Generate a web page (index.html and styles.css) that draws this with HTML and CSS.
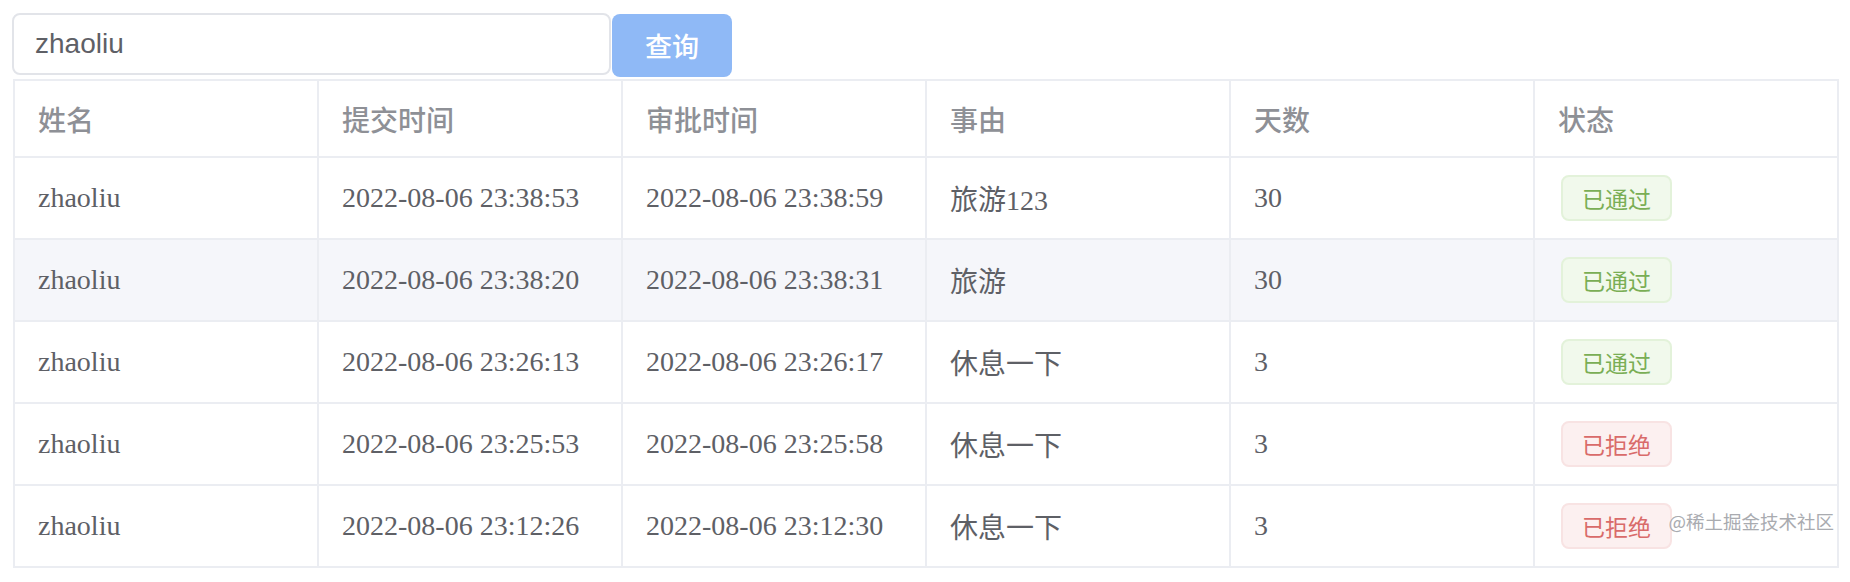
FILE: index.html
```html
<!DOCTYPE html>
<html lang="zh">
<head>
<meta charset="utf-8">
<title>审批记录</title>
<link rel="stylesheet" href="styles.css">
</head>
<body>
<div class="page">
  <div class="toolbar">
    <input class="search" type="text" value="zhaoliu">
    <button class="btn" type="button">查询</button>
  </div>
  <table class="grid">
    <colgroup>
      <col><col><col><col><col><col>
    </colgroup>
    <thead>
      <tr><th>姓名</th><th>提交时间</th><th>审批时间</th><th>事由</th><th>天数</th><th>状态</th></tr>
    </thead>
    <tbody>
      <tr><td>zhaoliu</td><td>2022-08-06 23:38:53</td><td>2022-08-06 23:38:59</td><td>旅游123</td><td>30</td><td><span class="tag ok">已通过</span></td></tr>
      <tr class="hover"><td>zhaoliu</td><td>2022-08-06 23:38:20</td><td>2022-08-06 23:38:31</td><td>旅游</td><td>30</td><td><span class="tag ok">已通过</span></td></tr>
      <tr><td>zhaoliu</td><td>2022-08-06 23:26:13</td><td>2022-08-06 23:26:17</td><td>休息一下</td><td>3</td><td><span class="tag ok">已通过</span></td></tr>
      <tr><td>zhaoliu</td><td>2022-08-06 23:25:53</td><td>2022-08-06 23:25:58</td><td>休息一下</td><td>3</td><td><span class="tag no">已拒绝</span></td></tr>
      <tr><td>zhaoliu</td><td>2022-08-06 23:12:26</td><td>2022-08-06 23:12:30</td><td>休息一下</td><td>3</td><td><span class="tag no">已拒绝</span></td></tr>
    </tbody>
  </table>
  <div class="watermark">@稀土掘金技术社区</div>
</div>
</body>
</html>
```

FILE: styles.css
```css
html, body {
  margin: 0;
  padding: 0;
  background: #ffffff;
}
.page {
  position: relative;
  width: 1850px;
  height: 582px;
  padding: 13px 0 0 12px;
  box-sizing: border-box;
}
.toolbar {
  display: flex;
  align-items: flex-start;
}
.search {
  box-sizing: border-box;
  width: 599px;
  height: 62px;
  margin: 0;
  padding: 0 0 0 21px;
  border: 2px solid #e2e4e9;
  border-radius: 8px;
  font-family: "Liberation Sans", "Noto Sans CJK SC", sans-serif;
  font-size: 28px;
  color: #5e6066;
  outline: none;
  background: #fff;
}
.btn {
  box-sizing: border-box;
  width: 120px;
  height: 63px;
  margin: 1px 0 0 1px;
  padding: 0;
  border: none;
  border-radius: 8px;
  background: #8fb9f6;
  color: #ffffff;
  font-family: "Noto Sans CJK SC", sans-serif;
  font-weight: 500;
  font-size: 27px;
}
.grid {
  margin: 2px 0 0 1px;
  width: 1826px;
  table-layout: fixed;
  border-collapse: collapse;
  border: 2px solid #ebedf2;
  font-family: "Liberation Serif", "Noto Sans CJK SC", serif;
  font-size: 28px;
  color: #5e6066;
}
.grid th, .grid td {
  border: 2px solid #ebedf2;
  text-align: left;
  padding: 0 0 0 23px;
  white-space: nowrap;
}
.grid th {
  height: 75px;
  color: #8e9096;
  font-weight: 500;
  font-family: "Noto Sans CJK SC", serif;
  font-size: 28px;
}
.grid td {
  height: 80px;
}
.grid td:last-child {
  padding-left: 26px;
}
.grid tr.hover td {
  background: #f5f6fa;
}
.tag {
  display: inline-block;
  box-sizing: border-box;
  height: 46px;
  line-height: 42px;
  padding: 0 19px;
  border: 2px solid;
  border-radius: 8px;
  font-family: "Noto Sans CJK SC", sans-serif;
  font-size: 23px;
  vertical-align: middle;
}
.tag.ok {
  background: #f1f9ec;
  border-color: #e3f2da;
  color: #7aae55;
}
.tag.no {
  background: #fcf0f0;
  border-color: #f8e3e3;
  color: #d96b6a;
}
.watermark {
  position: absolute;
  right: 16px;
  bottom: 48px;
  font-family: "Noto Sans CJK SC", sans-serif;
  font-size: 18.5px;
  color: #a9abb0;
  text-shadow: 0 0 2px #ffffff;
}
```
